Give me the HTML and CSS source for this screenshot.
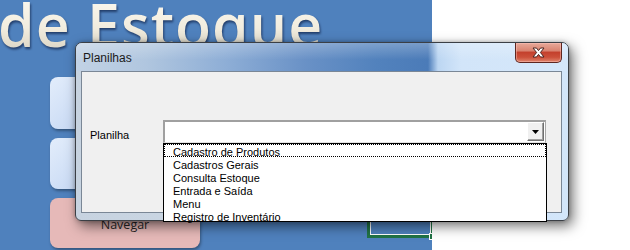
FILE: index.html
```html
<!DOCTYPE html>
<html lang="pt">
<head>
<meta charset="utf-8">
<title>Planilhas</title>
<link rel="stylesheet" href="styles.css">
</head>
<body>
<div class="screen">
  <div class="sheet">
    <div class="heading">de Estoque</div>
    <div class="shape btn-blue b1">Cadastrar</div>
    <div class="shape btn-blue b2">Consultar</div>
    <div class="shape btn-pink b3">Navegar</div>
    <div class="selection"><span class="handle"></span></div>
  </div>
  <div class="white-side"></div>

  <div class="dialog">
    <div class="titlebar">
      <span class="title">Planilhas</span>
      <div class="close">
        <svg width="17" height="11" viewBox="0 0 17 11">
          <path d="M3 1 L6.5 1 L8.5 3.6 L10.5 1 L14 1 L10.4 5.5 L14 10 L10.5 10 L8.5 7.4 L6.5 10 L3 10 L6.6 5.5 Z" fill="#ffffff" stroke="#4a2420" stroke-width="1" stroke-linejoin="round"/>
        </svg>
      </div>
    </div>
    <div class="client">
      <div class="row">
        <span class="label">Planilha</span>
        <div class="combo">
          <div class="combo-field"></div>
          <div class="combo-btn">
            <svg width="7" height="4" viewBox="0 0 7 4"><path d="M0 0 H7 L3.5 4 Z" fill="#000"/></svg>
          </div>
          <ul class="droplist">
            <li class="item focus">Cadastro de Produtos</li>
            <li class="item">Cadastros Gerais</li>
            <li class="item">Consulta Estoque</li>
            <li class="item">Entrada e Saída</li>
            <li class="item">Menu</li>
            <li class="item">Registro de Inventário</li>
          </ul>
        </div>
      </div>
    </div>
  </div>
</div>
</body>
</html>
```

FILE: styles.css
```css
* { box-sizing: border-box; }
html, body { margin: 0; padding: 0; }
body {
  width: 630px;
  height: 250px;
  overflow: hidden;
  background: #ffffff;
  font-family: "Liberation Sans", Arial, sans-serif;
}
.screen {
  position: relative;
  width: 630px;
  height: 250px;
  display: flex;
}
.sheet {
  position: relative;
  width: 432px;
  height: 250px;
  background: #4f81bd;
  overflow: hidden;
  flex: none;
}
.white-side { flex: 1; background: #fff; }

.heading {
  position: absolute;
  left: -2px;
  top: -5px;
  font-family: "Open Sans", sans-serif;
  font-weight: 600;
  font-size: 59px;
  line-height: 1;
  letter-spacing: 1px;
  white-space: nowrap;
  color: #f2eee1;
  background: linear-gradient(#fbf8ef 0%, #f2eddf 55%, #d8d2c2 100%);
  -webkit-background-clip: text;
  background-clip: text;
  -webkit-text-fill-color: transparent;
  filter: drop-shadow(1px 2px 1px rgba(20, 40, 80, 0.75));
}

.shape {
  position: absolute;
  left: 50px;
  width: 150px;
  height: 51px;
  border-radius: 8px;
  display: flex;
  align-items: center;
  justify-content: center;
  font-family: "Open Sans", sans-serif;
  font-size: 12.5px;
  color: #262626;
  box-shadow: 1px 2px 3px rgba(0, 0, 0, 0.35);
}
.btn-blue {
  background: linear-gradient(135deg, #e3edfb 0%, #c3d6f3 45%, #a4c0ec 100%);
}
.b1 { top: 77px; height: 52px; }
.b2 { top: 138px; }
.b3 {
  top: 198px;
  height: 50px;
  background: #e6b9b8;
  padding-top: 2px;
}

.selection {
  position: absolute;
  left: 367px;
  top: 200px;
  width: 67px;
  height: 38px;
  border: 3px solid #217346;
  border-top: none;
  box-shadow: inset 1px -1px 0 #ffffff, inset -1px 0 0 #ffffff;
}
.handle {
  position: absolute;
  right: -5px;
  bottom: -5px;
  width: 7px;
  height: 7px;
  background: #217346;
  border: 1px solid #ffffff;
}

/* dialog window */
.dialog {
  position: absolute;
  left: 75px;
  top: 42px;
  width: 494px;
  height: 179px;
  border: 1px solid #3b3f45;
  border-radius: 7px 7px 6px 6px;
  padding: 0 6px 7px 5px;
  display: flex;
  flex-direction: column;
  background:
    linear-gradient(to right, #c7d3e0 0px, #cdd9e6 250px, #bccfe6 350px, #cfe2f7 362px, #d3e6fa 100%);
  box-shadow: 4px 5px 13px rgba(0, 0, 0, 0.55), 0 0 4px rgba(0, 0, 0, 0.25);
}
.titlebar {
  position: relative;
  height: 28px;
  margin: 0 -6px 0 -5px;
  padding-left: 7px;
  display: flex;
  align-items: center;
  border-radius: 6px 6px 0 0;
  background:
    linear-gradient(to bottom, rgba(255,255,255,0.25), rgba(255,255,255,0) 60%),
    linear-gradient(to right, #c2d2e5 0px, #b0c6df 70px, #8eaed6 150px, #6991c6 230px, #5282bd 300px, #4b7bb8 352px, #bcd6f2 362px, #d2e5f9 385px, #d5e7fa 100%);
}
.title {
  font-family: "Liberation Sans", Arial, sans-serif;
  font-size: 12px;
  color: #1a1a1a;
  margin-top: 2px;
}
.close {
  position: absolute;
  right: 6px;
  top: 0;
  width: 47px;
  height: 20px;
  border: 1px solid #5e2620;
  border-top: none;
  border-radius: 0 0 5px 5px;
  display: flex;
  align-items: center;
  justify-content: center;
  background: linear-gradient(to bottom, #e7a99a 0%, #d98471 40%, #c4412d 50%, #cc503a 75%, #e0866e 100%);
  box-shadow: inset 0 0 0 1px rgba(255, 200, 190, 0.45);
}

.client {
  flex: 1;
  background: #f0f0f0;
  border: 1px solid #7a8796;
}
.row {
  display: flex;
  align-items: center;
  padding: 48px 0 0 8px;
}
.label {
  width: 73px;
  font-family: "Liberation Sans", Arial, sans-serif;
  font-size: 11px;
  color: #000;
  margin-top: 6px;
}
.combo {
  position: relative;
  width: 383px;
  height: 23px;
  display: flex;
  background: #fff;
  border-top: 2px solid #a0a0a0;
  border-left: 2px solid #a0a0a0;
  border-right: 1px solid #a8a8a8;
  border-bottom: 1px solid #e3e3e3;
}
.combo-field { flex: 1; }
.combo-btn {
  width: 17px;
  height: 19px;
  margin: 0 1px 1px 0;
  background: #f0f0f0;
  border-top: 1px solid #fff;
  border-left: 1px solid #fff;
  border-right: 1px solid #6f6f6f;
  border-bottom: 1px solid #6f6f6f;
  box-shadow: inset -1px -1px 0 #a0a0a0;
  display: flex;
  align-items: center;
  justify-content: center;
}
.combo-btn svg { margin-top: 1px; }

.droplist {
  position: absolute;
  left: -2px;
  top: 21px;
  width: 384px;
  height: 79px;
  margin: 0;
  padding: 0;
  list-style: none;
  background: #fff;
  border: 1px solid #000;
  z-index: 5;
}
.item {
  height: 13px;
  line-height: 13px;
  padding: 2px 0 0 9px;
  font-family: "Liberation Sans", Arial, sans-serif;
  font-size: 11px;
  color: #000;
  white-space: nowrap;
}
.item.focus {
  outline: 1px dotted #000;
  outline-offset: -1px;
}
```
